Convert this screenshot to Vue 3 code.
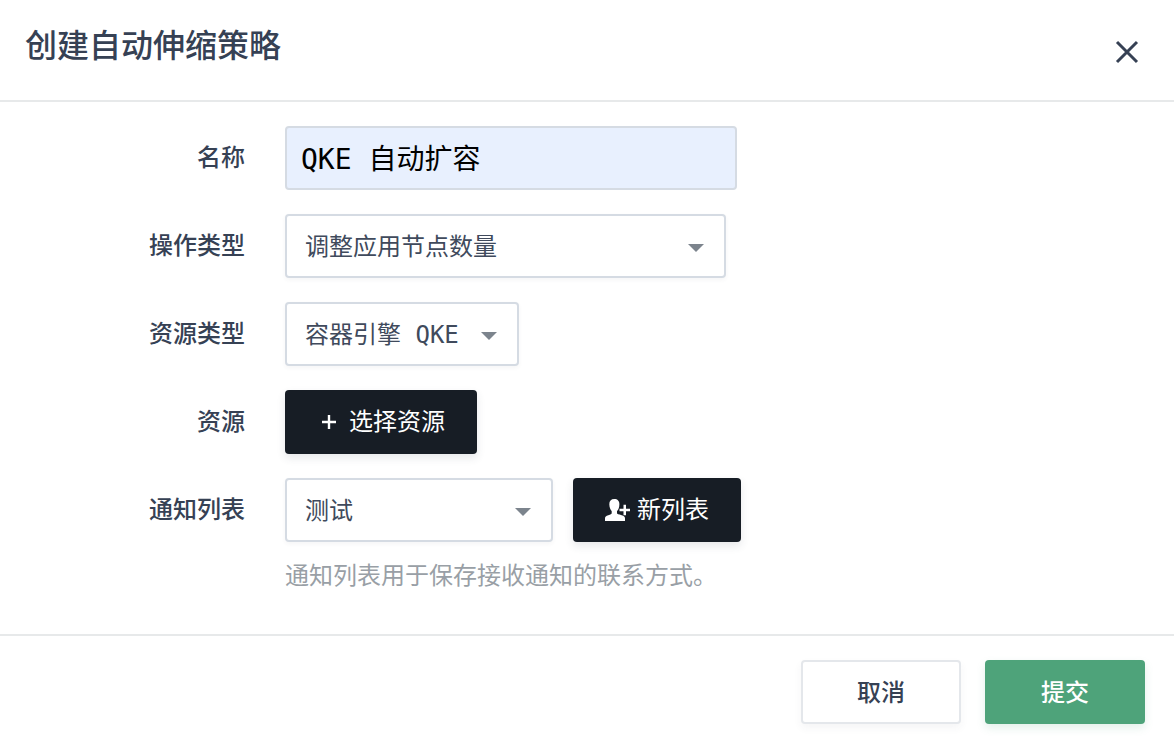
<script setup>
import { ref } from 'vue'

const name = ref('QKE 自动扩容')
const operation = ref('调整应用节点数量')
const resourceType = ref('容器引擎 QKE')
const notifyList = ref('测试')
</script>

<template>
  <form class="dialog" role="dialog" aria-labelledby="dialog-title" @submit.prevent>
    <header class="header">
      <h1 id="dialog-title" class="title">创建自动伸缩策略</h1>
      <button type="button" class="close" aria-label="关闭">
        <svg width="24" height="24" viewBox="0 0 24 24" fill="none" stroke="currentColor" stroke-width="3">
          <path d="M2 2L22 22M22 2L2 22" />
        </svg>
      </button>
    </header>

    <div class="body">
      <div class="row">
        <label class="label" for="name">名称</label>
        <input id="name" v-model="name" class="input" type="text" />
      </div>

      <div class="row">
        <label class="label" for="operation">操作类型</label>
        <div class="select wide">
          <select id="operation" v-model="operation">
            <option>调整应用节点数量</option>
          </select>
          <svg class="caret" width="16" height="8" viewBox="0 0 16 8"><path d="M0 0H16L8 8Z" /></svg>
        </div>
      </div>

      <div class="row">
        <label class="label" for="resource-type">资源类型</label>
        <div class="select narrow">
          <select id="resource-type" v-model="resourceType">
            <option>容器引擎 QKE</option>
          </select>
          <svg class="caret" width="16" height="8" viewBox="0 0 16 8"><path d="M0 0H16L8 8Z" /></svg>
        </div>
      </div>

      <div class="row">
        <label class="label" for="resource">资源</label>
        <button id="resource" type="button" class="button dark">
          <svg width="24" height="24" viewBox="0 0 24 24" fill="none" stroke="currentColor" stroke-width="2.4">
            <path d="M12 5V19M5 12H19" />
          </svg>
          选择资源
        </button>
      </div>

      <div class="row">
        <label class="label" for="notify-list">通知列表</label>
        <div class="controls">
          <div class="select medium">
            <select id="notify-list" v-model="notifyList">
              <option>测试</option>
            </select>
            <svg class="caret" width="16" height="8" viewBox="0 0 16 8"><path d="M0 0H16L8 8Z" /></svg>
          </div>
          <button type="button" class="button dark">
            <svg class="user" width="24" height="24" viewBox="0 0 24 24" fill="currentColor">
              <path d="M9.300 1C6 1 4.300 3 4.300 6.300C4.300 8 4.700 9.700 5.300 11C5.800 12 6.200 12.500 6.700 13V15.300C6.700 16.200 5.500 16.500 3.300 17.200C1 18 0 18.500 0 20.500V23H20V20.500C20 18.500 19 18 16.700 17.200C13.500 16.300 12 16.200 12 15.300V13C12.500 12.500 13 12 13.500 11C14.100 9.700 14.400 8 14.400 6.300C14.400 3 12.600 1 9.300 1Z" />
              <path d="M18.500 6.800H21V10.800H25V13.200H21V17.200H18.500V13.200H14.500V10.800H18.500Z" />
            </svg>
            新列表
          </button>
        </div>
      </div>

      <p class="hint">通知列表用于保存接收通知的联系方式。</p>
    </div>

    <footer class="footer">
      <button type="button" class="button plain">取消</button>
      <button type="submit" class="button primary">提交</button>
    </footer>
  </form>
</template>

<style>
body {
  margin: 0;
  background: #fff;
}
</style>

<style scoped>
.dialog {
  color: #364154;
  font-family: "DejaVu Sans Mono", "Noto Sans CJK SC", monospace;
  font-size: 24px;
  line-height: 36px;
}

.header {
  display: flex;
  align-items: flex-start;
  justify-content: space-between;
  box-sizing: border-box;
  min-height: 102px;
  padding: 22px 35px 28px 25px;
  border-bottom: 2px solid #e7e9ea;
}

.title {
  margin: 0;
  font-size: 32px;
  line-height: 48px;
  font-weight: 500;
}

.close {
  display: flex;
  margin-top: 18px;
  padding: 0;
  border: 0;
  background: none;
  color: #364154;
  cursor: pointer;
}

.body {
  display: flex;
  flex-direction: column;
  gap: 24px;
  padding: 24px 24px 40px;
}

.row {
  display: grid;
  grid-template-columns: 221px 1fr;
  column-gap: 40px;
  align-items: center;
  justify-items: start;
}

.label {
  justify-self: end;
  font-weight: 500;
}

.input,
.select select {
  box-sizing: border-box;
  height: 64px;
  border: 2px solid #d5dbe3;
  border-radius: 4px;
  font-family: inherit;
}

.input {
  width: 452px;
  max-width: 100%;
  padding: 0 14px 2px;
  background: #e8f0fe;
  color: #000;
  font-size: 28px;
}

.select {
  position: relative;
  max-width: 100%;
}

.select select {
  width: 100%;
  padding: 2px 48px 0 18px;
  appearance: none;
  background: #fff;
  box-shadow: 0 2px 4px rgba(54, 63, 83, 0.05);
  color: #404a5c;
  font-size: 24px;
}

.caret {
  position: absolute;
  top: 30px;
  right: 22px;
  fill: #7c848d;
  pointer-events: none;
}

.wide {
  width: 441px;
}

.narrow {
  width: 234px;
}

.medium {
  width: 268px;
}

.controls {
  display: flex;
  flex-wrap: wrap;
  gap: 20px;
}

.button {
  display: flex;
  align-items: center;
  justify-content: center;
  gap: 8px;
  box-sizing: border-box;
  height: 64px;
  padding: 0 32px;
  border: 0;
  border-radius: 4px;
  font-family: inherit;
  font-size: 24px;
  line-height: 36px;
  cursor: pointer;
}

.user {
  overflow: visible;
}

.dark {
  background: #171d25;
  box-shadow: 0 4px 8px rgba(54, 63, 83, 0.12);
  color: #fff;
}

.hint {
  margin: -8px 0 0 261px;
  color: #999fa6;
}

.footer {
  display: flex;
  justify-content: flex-end;
  gap: 24px;
  padding: 24px 29px 16px;
  border-top: 2px solid #e7e9ea;
}

.plain,
.primary {
  width: 160px;
  padding-top: 2px;
  font-weight: 500;
}

.plain {
  border: 2px solid #e4e7eb;
  background: #fff;
  box-shadow: 0 4px 8px rgba(54, 63, 83, 0.05);
  color: #364154;
}

.primary {
  background: #4ea37a;
  box-shadow: 0 4px 8px rgba(78, 163, 122, 0.16);
  color: #fff;
}
</style>
